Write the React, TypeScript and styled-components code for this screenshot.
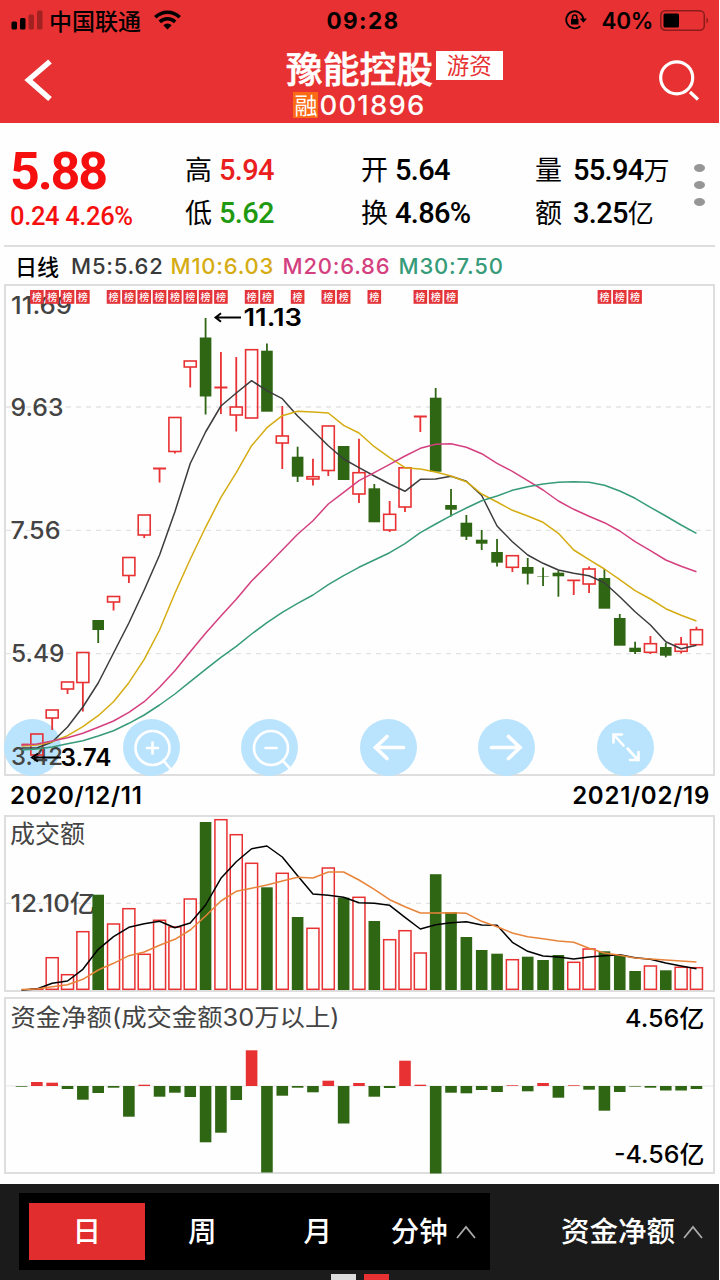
import React from "react";
import styled, { createGlobalStyle } from "styled-components";

const RED = "#e83132";
const GREEN = "#2f6613";
const cjk = `"Noto Sans CJK SC"`;

const GlobalStyle = createGlobalStyle`
  * { box-sizing: border-box; }
  body { margin: 0; background: #fefefe; }
  svg { display: block; }
  button { border: 0; padding: 0; font: inherit; color: inherit; background: none; }
`;

const Screen = styled.main`
  width: 720px;
  height: 1280px;
  overflow: hidden;
  display: flex;
  flex-direction: column;
  font-family: Inter, ${cjk}, sans-serif;
  color: #000;
  white-space: nowrap;
`;

/* ---------- header ---------- */

const Header = styled.header`
  width: 719px;
  height: 123px;
  flex: none;
  background: ${RED};
`;

const StatusBar = styled.div`
  height: 40px;
  display: grid;
  grid-template-columns: 1fr auto 1fr;
  align-items: center;
  padding: 0 9px 0 11px;
`;

const StatusGroup = styled.div<{ $end?: boolean }>`
  display: flex;
  align-items: center;
  justify-content: ${(p) => (p.$end ? "flex-end" : "flex-start")};
`;

const Carrier = styled.span`
  margin: 0 13px 0 6px;
  font: 500 23px/38px ${cjk}, sans-serif;
`;

const Clock = styled.span`
  font-size: 22.5px;
  font-weight: 700;
  letter-spacing: 1.4px;
  padding-left: 5px;
`;

const Percent = styled.span`
  margin: 0 7px 0 14px;
  font-size: 22.5px;
  font-weight: 600;
  letter-spacing: -0.3px;
`;

const NavBar = styled.div`
  height: 83px;
  display: flex;
  justify-content: space-between;
  padding: 0 19px 0 24px;
`;

const NavButton = styled.button`
  width: 42px;
  height: 82px;
`;

const Titles = styled.div`
  display: flex;
  flex-direction: column;
  align-items: center;
  padding-left: 65px;
  color: #fff;
`;

const NameRow = styled.div`
  display: flex;
  align-items: flex-start;
  height: 52px;
`;

const StockName = styled.h1`
  margin: 0;
  font: 500 36.7px/55px ${cjk}, sans-serif;
  -webkit-text-stroke: 0.6px #fff;
`;

const Tag = styled.span`
  width: 67px;
  height: 29px;
  margin: 11px 0 0 3px;
  background: #fff;
  color: ${RED};
  font: 400 22.5px/27px ${cjk}, sans-serif;
  text-align: center;
`;

const CodeRow = styled.div`
  display: flex;
  align-items: center;
  height: 26px;
  margin-right: 70px;
  font-size: 27.5px;
  font-weight: 500;
  letter-spacing: 1.2px;
`;

const MarginBadge = styled.span`
  width: 25px;
  height: 26px;
  margin-right: 1px;
  background: #fb6a15;
  font: 400 23px/24px ${cjk}, sans-serif;
  letter-spacing: 0;
  text-align: center;
`;

/* ---------- quote ---------- */

const Quote = styled.section`
  width: 711px;
  height: 124px;
  margin-left: 4px;
  flex: none;
  display: grid;
  grid-template-columns: 181px 176px 174px 154px 1fr;
  border-bottom: 2px solid #dedede;
`;

const PriceCell = styled.div`
  padding: 25px 0 0 6px;
  color: #f5100f;
  font-family: Roboto, sans-serif;
`;

const Price = styled.div`
  font-size: 52px;
  line-height: 48px;
  font-weight: 700;
  letter-spacing: -2.2px;
`;

const Change = styled.div`
  margin-top: 7px;
  font-size: 25.5px;
  line-height: 26px;
  font-weight: 500;
  letter-spacing: -0.35px;
`;

const StatCell = styled.dl`
  margin: 0;
  padding-top: 25px;
`;

const StatRow = styled.div`
  display: flex;
  align-items: flex-start;
  height: 43px;
`;

const StatLabel = styled.dt<{ $gap: number }>`
  margin-right: ${(p) => p.$gap}px;
  font: 400 27px/42px ${cjk}, sans-serif;
`;

const StatValue = styled.dd<{ $color?: string }>`
  margin: 0;
  color: ${(p) => p.$color ?? "#000"};
  font: 500 29px/44px Roboto, sans-serif;
  letter-spacing: -0.7px;
`;

const Unit = styled.span`
  font: 400 26px/42px ${cjk}, sans-serif;
`;

const MoreButton = styled.button`
  display: flex;
  flex-direction: column;
  align-items: center;
  gap: 9px;
  padding: 41px 6px 0 0;
`;

const Dot = styled.i`
  width: 11px;
  height: 8px;
  border-radius: 50%;
  background: #969696;
`;

/* ---------- charts ---------- */

const Legend = styled.div`
  height: 37px;
  flex: none;
  display: flex;
  align-items: center;
  padding-left: 15px;
  font-size: 22px;
`;

const LegendItem = styled.span<{ $color: string; $width: number }>`
  width: ${(p) => p.$width}px;
  color: ${(p) => p.$color};
  font-weight: 500;
  letter-spacing: 0.8px;
`;

const LegendTitle = styled.span`
  width: 56px;
  font: 500 22px/35px ${cjk}, sans-serif;
`;

const Panel = styled.section<{ $height: number; $top?: number }>`
  position: relative;
  width: 711px;
  height: ${(p) => p.$height}px;
  flex: none;
  margin: ${(p) => p.$top ?? 0}px 0 0 4px;
  border: 2px solid #dedede;

  > svg {
    position: relative;
    overflow: visible;
  }
`;

const DateRow = styled.div`
  height: 39px;
  flex: none;
  display: flex;
  align-items: center;
  justify-content: space-between;
  padding: 0 10px 0 10px;
  font-size: 24px;
  font-weight: 600;
  letter-spacing: 0.75px;
`;

const Tools = styled.div`
  position: absolute;
  left: -2px;
  right: 0;
  bottom: -2px;
  display: flex;
  gap: 61.6px;
`;

const ToolButton = styled.button`
  width: 57px;
  height: 57px;
  border-radius: 50%;
  background: #bae4fd;
`;

/* ---------- bottom bar ---------- */

const BottomBar = styled.nav`
  width: 719px;
  height: 96px;
  flex: none;
  margin-top: 10px;
  padding: 9px 16px 0 19px;
  background: #1b1b1b;
  color: #fff;
  display: grid;
  grid-template-columns: 471px 1fr;
  grid-template-rows: 77px 10px;
  font: 500 28.5px/54px ${cjk}, sans-serif;
`;

const Periods = styled.div`
  display: flex;
  padding: 10px;
  background: #000;
`;

const Period = styled.button<{ $active?: boolean }>`
  width: 115.5px;
  height: 57px;
  flex: none;
  display: flex;
  align-items: flex-start;
  justify-content: center;
  gap: 8px;
  background: ${(p) => (p.$active ? "#e22d2f" : "transparent")};
`;

const Indicator = styled.button`
  display: flex;
  align-items: flex-start;
  justify-content: flex-end;
  gap: 8px;
  padding-top: 10px;
`;

const ChevronIcon = styled.svg`
  margin-top: 22px;
`;

const Pager = styled.div`
  grid-column: 1 / -1;
  display: flex;
  gap: 8px;
  padding: 4px 0 0 312px;
`;

const Page = styled.i<{ $on?: boolean }>`
  width: 25px;
  height: 6px;
  background: ${(p) => (p.$on ? "#e83132" : "#dcdcdc")};
`;

/* ---------- data ---------- */

const xAt = (i: number) => 21.5 + 15.34 * i;

// kind, body top, body bottom, wick top, wick bottom
type Candle = [string, number, number, number, number];
const candles: Candle[] = [
  ["-", 744.5, 744.5, 744.5, 744.5], ["r", 734, 755, 734, 755], ["r", 710, 718, 710, 730], ["r", 682, 689, 682, 694],
  ["r", 652.5, 682.5, 652, 711.5], ["g", 620, 630, 620, 643], ["r", 596.5, 602, 596, 610.5], ["r", 557.5, 575.5, 557, 583],
  ["r", 515, 535, 515, 538], ["r", 468.5, 468.5, 468, 482.5], ["r", 417.5, 451.5, 417, 453.5], ["r", 361, 367, 361, 387.5],
  ["g", 337.5, 396.5, 318, 414.5], ["r", 387.5, 387.5, 352, 414], ["r", 407, 415, 357, 431.5], ["r", 349.7, 418, 350, 418],
  ["g", 350.7, 411.7, 343.5, 411], ["r", 436, 443, 406, 469], ["g", 456.7, 476.7, 446.7, 482], ["r", 476.7, 479, 458.7, 485.5],
  ["r", 426, 470.5, 426, 476], ["g", 446, 480, 446, 480], ["r", 472.7, 494, 438.7, 503], ["g", 488.3, 522.3, 484, 522],
  ["r", 514.3, 530, 501, 532], ["r", 467.8, 507, 467, 512], ["r", 416.5, 416.5, 416, 432], ["g", 397.7, 471.7, 388, 471],
  ["g", 505, 509.7, 489, 516.5], ["g", 522.7, 536.7, 515, 540], ["g", 539.7, 543.7, 530, 550], ["g", 552, 562.7, 539, 566.5],
  ["r", 555.7, 567.3, 555, 572], ["g", 567, 573.7, 558, 584.5], ["g", 576.3, 576.8, 567.5, 586], ["g", 572.7, 576.3, 570.5, 596.7],
  ["r", 580.3, 580.3, 580, 595], ["r", 569, 584, 566.5, 593], ["g", 578, 608.7, 569, 608], ["g", 618, 645.7, 614, 645],
  ["g", 647.7, 652, 641.7, 654], ["r", 643.7, 652.3, 636, 654], ["g", 647, 655.7, 643, 657.3], ["r", 644.3, 651.3, 637, 653.5],
  ["r", 629.7, 644.7, 626.7, 645],
];

const ma5 = [748, 748, 742, 727, 707, 683, 653, 623, 590, 555, 511.7, 463.5, 432, 406, 393, 380.7, 390.7, 398.7, 416, 430.7, 445.7, 459, 467.7, 476, 484, 491.3, 479.3, 479, 476.3, 481.3, 495.5, 526, 541.7, 555, 563.3, 570, 573.3, 575.7, 582.7, 596.7, 611.7, 625, 641.7, 648.7, 645.3];
const ma10 = [746, 745, 741.7, 735.7, 726.7, 715.7, 701.7, 682.7, 659.3, 630, 593.3, 559.3, 527.3, 497.3, 472.7, 445.7, 427.7, 415.7, 411.3, 412, 413, 425.3, 433, 446.7, 457.7, 467.7, 469, 472, 476, 481.7, 494, 502, 510.3, 516, 522.3, 533.3, 550, 559.7, 569, 579.7, 590.7, 599, 608.7, 615.3, 621];
const ma20 = [745, 744, 741, 737.7, 733.3, 727.3, 721, 712.3, 701.7, 687.3, 670.7, 651.7, 633.3, 616, 599.3, 581, 565.7, 550, 534.3, 520.7, 504, 492.3, 480.7, 472.7, 464.3, 456, 448.3, 444.3, 443.7, 447.3, 453.7, 463.3, 471.3, 480.7, 490, 501, 509.3, 516.3, 522.7, 531, 541.7, 550.7, 560, 566.3, 571.7];
const ma30 = [750, 749, 747, 743.7, 740.7, 736, 730.7, 723.3, 715, 705, 694, 681.7, 669.3, 657.3, 646.3, 634, 622.7, 612.3, 603.3, 595, 584.7, 575.7, 567.3, 560, 552.7, 543.7, 532.7, 524, 515.7, 508, 500.7, 496, 490.3, 486.7, 484, 482.3, 481.7, 482.3, 485.3, 491, 498.3, 507.3, 516, 525, 533.3];

const volumes = [989.5, 989, 957.7, 974.7, 931.7, 894.7, 924, 908.7, 954.3, 920.3, 927, 899, 822, 819.7, 834.7, 863.3, 887.3, 873.3, 917, 928.3, 868, 897.7, 897.3, 921, 939.7, 930.7, 953, 874.2, 912, 937, 950, 953.7, 959.7, 956.7, 960, 955, 962.3, 949, 951.3, 955.7, 971, 966, 970.3, 967.3, 967.7];
const vma5 = [990, 989, 983.3, 981, 969.3, 949.3, 936.7, 927.3, 923.7, 921.3, 927.7, 923, 905, 878.3, 861.7, 848.7, 846, 857, 875.7, 894, 895.3, 897.3, 902.7, 903.3, 905.3, 917.3, 929, 924.7, 922.7, 921.7, 925, 925.3, 942.3, 951.3, 956, 957, 959, 957, 955.7, 954.7, 957.7, 959.3, 963, 966, 968.7];
const vma10 = [989.5, 989, 986.7, 984.7, 979.3, 970, 963.3, 955.7, 952, 945.3, 939.3, 930, 916, 901, 891.3, 888.3, 885, 881, 877.3, 878, 872, 872, 880, 889.3, 899.7, 906.7, 913, 913, 912.7, 913.3, 921.3, 926.7, 933, 936.7, 938.7, 941, 942.3, 948.3, 953, 955.3, 958, 959, 960, 961, 962];

const flows = [1086.7, 1082, 1082.7, 1089, 1099.7, 1093, 1087.7, 1116.7, 1084.7, 1096.7, 1092.7, 1097, 1142.3, 1132.7, 1100, 1050.3, 1172.5, 1095.7, 1087.7, 1092.3, 1080.7, 1123.5, 1083, 1096.7, 1088, 1060.7, 1084.7, 1173.5, 1092.7, 1093.3, 1090, 1092, 1085.3, 1091.3, 1083, 1097.7, 1085.3, 1089.7, 1110.7, 1092, 1086.6, 1087.7, 1090.5, 1090.5, 1089];

const badges = [1, 2, 3, 4, 6, 7, 8, 9, 10, 11, 12, 13, 15, 16, 18, 20, 21, 23, 26, 27, 28, 38, 39, 40];

const points = (ys: number[]) => ys.map((y, i) => `${xAt(i)},${y}`).join(" ");

const Line = ({ ys, color }: { ys: number[]; color: string }) => (
  <polyline points={points(ys)} fill="none" stroke={color} strokeWidth={1.5} strokeLinejoin="round" />
);

const Label = ({ x, y, w, color = "#444", weight = 500, size = 24, children }: {
  x: number; y: number; w: number; color?: string; weight?: number; size?: number; children: string;
}) => (
  <text x={x} y={y} fill={color} fontSize={size} fontWeight={weight} textLength={w} lengthAdjust="spacingAndGlyphs">{children}</text>
);

const Grid = ({ y }: { y: number }) => (
  <path d={`M6 ${y}H713`} stroke="#e3e3e3" strokeWidth={1.3} strokeDasharray="5 5" />
);

const CandleShape = ({ c, i }: { c: Candle; i: number }) => {
  const [kind, top, bottom, high, low] = c;
  const x = xAt(i);
  if (kind === "-") {
    return <path d={`M${x} ${top}h7`} stroke={RED} strokeWidth={1.8} />;
  }
  if (kind === "g") {
    return (
      <g fill={GREEN}>
        <path d={`M${x} ${high}V${low}`} stroke={GREEN} strokeWidth={1.8} />
        <rect x={x - 5.8} y={top} width={11.6} height={bottom - top} />
      </g>
    );
  }
  if (top === bottom) {
    return <path d={`M${x - 6.5} ${top}h13M${x} ${high}V${low}`} stroke={RED} strokeWidth={1.8} />;
  }
  return (
    <g fill="none" stroke={RED} strokeWidth={1.6}>
      <path d={`M${x} ${high}V${top}M${x} ${bottom}V${low}`} strokeWidth={1.8} />
      <rect x={x - 6} y={top} width={12} height={bottom - top} />
    </g>
  );
};

const PriceChart = () => (
  <svg width="707" height="488" viewBox="6 286 707 488">
    <Grid y={407} /><Grid y={530.3} /><Grid y={653.7} />
    <Label x={11} y={313.5} w={61}>11.69</Label>
    <Label x={10.5} y={416} w={53}>9.63</Label>
    <Label x={10.5} y={539} w={50}>7.56</Label>
    <Label x={11} y={662} w={53.5}>5.49</Label>
    <Label x={11} y={765} w={52}>3.42</Label>
    {candles.map((c, i) => <CandleShape key={i} c={c} i={i} />)}
    <Line ys={ma5} color="#3c3c3c" />
    <Line ys={ma10} color="#d5ac12" />
    <Line ys={ma20} color="#d4407f" />
    <Line ys={ma30} color="#369b78" />
    {badges.map((i) => (
      <g key={i}>
        <rect x={xAt(i) - 6.8} y={290} width={13.6} height={13.8} fill="#e3343a" />
        <text x={xAt(i)} y={300.8} fontSize={10} fontWeight={500} fill="#fff" textAnchor="middle">榜</text>
      </g>
    ))}
    <g fill="none" stroke="#000" strokeWidth={2}>
      <path d="M241 317.5H216M221 313.2L215.5 317.5L221 321.8" />
      <path d="M61 757.5H34M38 753.5L32 757.5L38 761.5" />
    </g>
    <Label x={243.5} y={326} w={58.5} color="#000" weight={600}>11.13</Label>
    <Label x={60.5} y={765.5} w={51} color="#000" weight={600}>3.74</Label>
  </svg>
);

const VolumeChart = () => (
  <svg width="707" height="173" viewBox="6 817 707 173">
    <Grid y={903.3} />
    <Label x={10} y={843} w={75} size={25} weight={400}>成交额</Label>
    <Label x={10.5} y={912} w={85}>12.10亿</Label>
    {volumes.map((y, i) => {
      if (candles[i][0] === "-") return null;
      return candles[i][0] === "g" ? (
        <rect key={i} x={xAt(i) - 5.8} y={y} width={11.6} height={990 - y} fill={GREEN} />
      ) : (
        <rect key={i} x={xAt(i) - 6} y={y} width={12} height={Math.max(989.3 - y, 0.3)} fill="none" stroke={RED} strokeWidth={1.5} />
      );
    })}
    <Line ys={vma5} color="#000" />
    <Line ys={vma10} color="#e8843a" />
  </svg>
);

const FlowChart = () => (
  <svg width="707" height="173" viewBox="6 999 707 173">
    <path d="M6 1086H713" stroke="#e6e6e6" strokeWidth={1.2} />
    <Label x={10.5} y={1026} w={329} weight={400}>资金净额(成交金额30万以上)</Label>
    <Label x={625} y={1027} w={79.5} color="#000">4.56亿</Label>
    <Label x={614} y={1162.5} w={90.5} color="#000">-4.56亿</Label>
    {flows.map((y, i) => (
      <rect key={i} x={xAt(i) - 5.8} y={Math.min(y, 1086)} width={11.6} height={Math.abs(y - 1086)} fill={y < 1086 ? RED : GREEN} />
    ))}
  </svg>
);

const toolIcons = [
  "",
  "M48 50.5L40.500 41.500M29.5 12a17 17 0 1 1 0 34a17 17 0 1 1 0-34M29.5 23.500v11M24 29h11",
  "M49 49.5L41.500 41.500M30 12a17 17 0 1 1 0 34a17 17 0 1 1 0-34M24.500 29h11",
  "M43.5 28.5H16M27 17.5L15.5 28.5L27 39.5",
  "M13.5 28.5H42M30.500 17.5L42 28.5L30.500 39.5",
  "M26.500 26.500L17 16M16.500 23.500V15.500H25M30.500 29.500L41 41M33 41H41.500V33",
];

const Chevron = () => (
  <ChevronIcon width="20" height="14" viewBox="0 0 20 14" fill="none" stroke="#aaa" strokeWidth="1.8">
    <path d="M1 13L10 2L19 13" />
  </ChevronIcon>
);

const Stat = ({ label, value, unit, color, gap = 7 }: {
  label: string; value: string; unit?: string; color?: string; gap?: number;
}) => (
  <StatRow>
    <StatLabel $gap={gap}>{label}</StatLabel>
    <StatValue $color={color}>{value}{unit && <Unit>{unit}</Unit>}</StatValue>
  </StatRow>
);

export default function App() {
  return (
    <Screen>
      <GlobalStyle />
      <Header>
        <StatusBar>
          <StatusGroup>
            <svg width="32" height="20" viewBox="0 0 32 20">
              <rect x="0.500" y="11.500" width="5.500" height="8" rx="1.500" />
              <rect x="9" y="8" width="5.500" height="11.500" rx="1.500" />
              <rect x="17.500" y="4.500" width="5.500" height="15" rx="1.500" opacity="0.3" />
              <rect x="26" y="0.500" width="5.500" height="19" rx="1.500" opacity="0.3" />
            </svg>
            <Carrier>中国联通</Carrier>
            <svg width="27" height="20" viewBox="0 0 27 20" fill="none" stroke="#000" strokeWidth="3.600">
              <path d="M1.300 7.300A17.300 17.300 0 0 1 25.700 7.300" />
              <path d="M5.800 11.900A11 11 0 0 1 21.200 11.900" />
              <path d="M13.500 19.500L9.300 15.300A6 6 0 0 1 17.700 15.300Z" fill="#000" stroke="none" />
            </svg>
          </StatusGroup>
          <Clock>09:28</Clock>
          <StatusGroup $end>
            <svg width="22" height="20" viewBox="0 0 22 20" fill="none" stroke="#000" strokeWidth="1.800">
              <path d="M15.300 16.200A8.500 8.500 0 1 1 18.200 9" />
              <path d="M14.700 8.500H22L18.400 12.800Z" fill="#000" stroke="none" />
              <rect x="6" y="9" width="7.500" height="5.500" fill="#000" stroke="none" />
              <path d="M7.500 9V7.300a2.200 2.200 0 0 1 4.400 0V9" strokeWidth="1.500" />
            </svg>
            <Percent>40%</Percent>
            <svg width="50" height="21" viewBox="0 0 50 21">
              <rect x="0.800" y="0.800" width="43.500" height="19.400" rx="4.500" fill="none" stroke="#8a1c1c" strokeWidth="1.500" />
              <rect x="3.500" y="3.500" width="15.500" height="14" rx="1.500" />
              <path d="M46.500 7.500c2 .8 2 5.200 0 6z" fill="#8a1c1c" />
            </svg>
          </StatusGroup>
        </StatusBar>
        <NavBar>
          <NavButton>
            <svg width="42" height="82" viewBox="24 40 42 82" fill="none" stroke="#fff" strokeWidth="5.500">
              <path d="M50 61.500L28.500 80L50 99" />
            </svg>
          </NavButton>
          <Titles>
            <NameRow>
              <StockName>豫能控股</StockName>
              <Tag>游资</Tag>
            </NameRow>
            <CodeRow><MarginBadge>融</MarginBadge>001896</CodeRow>
          </Titles>
          <NavButton>
            <svg width="42" height="82" viewBox="658 40 42 82" fill="none" stroke="#fff" strokeWidth="3.200">
              <circle cx="676.700" cy="77.800" r="16" />
              <path d="M690 92L698 99.500" />
            </svg>
          </NavButton>
        </NavBar>
      </Header>

      <Quote>
        <PriceCell>
          <Price>5.88</Price>
          <Change>0.24 4.26%</Change>
        </PriceCell>
        <StatCell>
          <Stat label="高" value="5.94" color="#ea2020" />
          <Stat label="低" value="5.62" color="#1f9a10" />
        </StatCell>
        <StatCell>
          <Stat label="开" value="5.64" />
          <Stat label="换" value="4.86%" />
        </StatCell>
        <StatCell>
          <Stat label="量" value="55.94" unit="万" gap={11} />
          <Stat label="额" value="3.25" unit="亿" gap={11} />
        </StatCell>
        <MoreButton><Dot /><Dot /><Dot /></MoreButton>
      </Quote>

      <Legend>
        <LegendTitle>日线</LegendTitle>
        <LegendItem $color="#3a3a3a" $width={99.5}>M5:5.62</LegendItem>
        <LegendItem $color="#d5ac12" $width={112}>M10:6.03</LegendItem>
        <LegendItem $color="#d4407f" $width={116}>M20:6.86</LegendItem>
        <LegendItem $color="#369b78" $width={110}>M30:7.50</LegendItem>
      </Legend>

      <Panel $height={492}>
        <Tools>
          {toolIcons.map((d, i) => (
            <ToolButton key={i}>
              <svg width="57" height="57" viewBox="0 0 57 57" fill="none" stroke="#fff"
                strokeWidth={i === 3 || i === 4 ? 3.7 : 2.6} strokeLinecap="round">
                <path d={d} />
              </svg>
            </ToolButton>
          ))}
        </Tools>
        <PriceChart />
      </Panel>
      <DateRow><span>2020/12/11</span><span>2021/02/19</span></DateRow>
      <Panel $height={177}><VolumeChart /></Panel>
      <Panel $height={177} $top={5}><FlowChart /></Panel>

      <BottomBar>
        <Periods>
          <Period $active>日</Period>
          <Period>周</Period>
          <Period>月</Period>
          <Period>分钟<Chevron /></Period>
        </Periods>
        <Indicator>资金净额<Chevron /></Indicator>
        <Pager><Page /><Page $on /></Pager>
      </BottomBar>
    </Screen>
  );
}
